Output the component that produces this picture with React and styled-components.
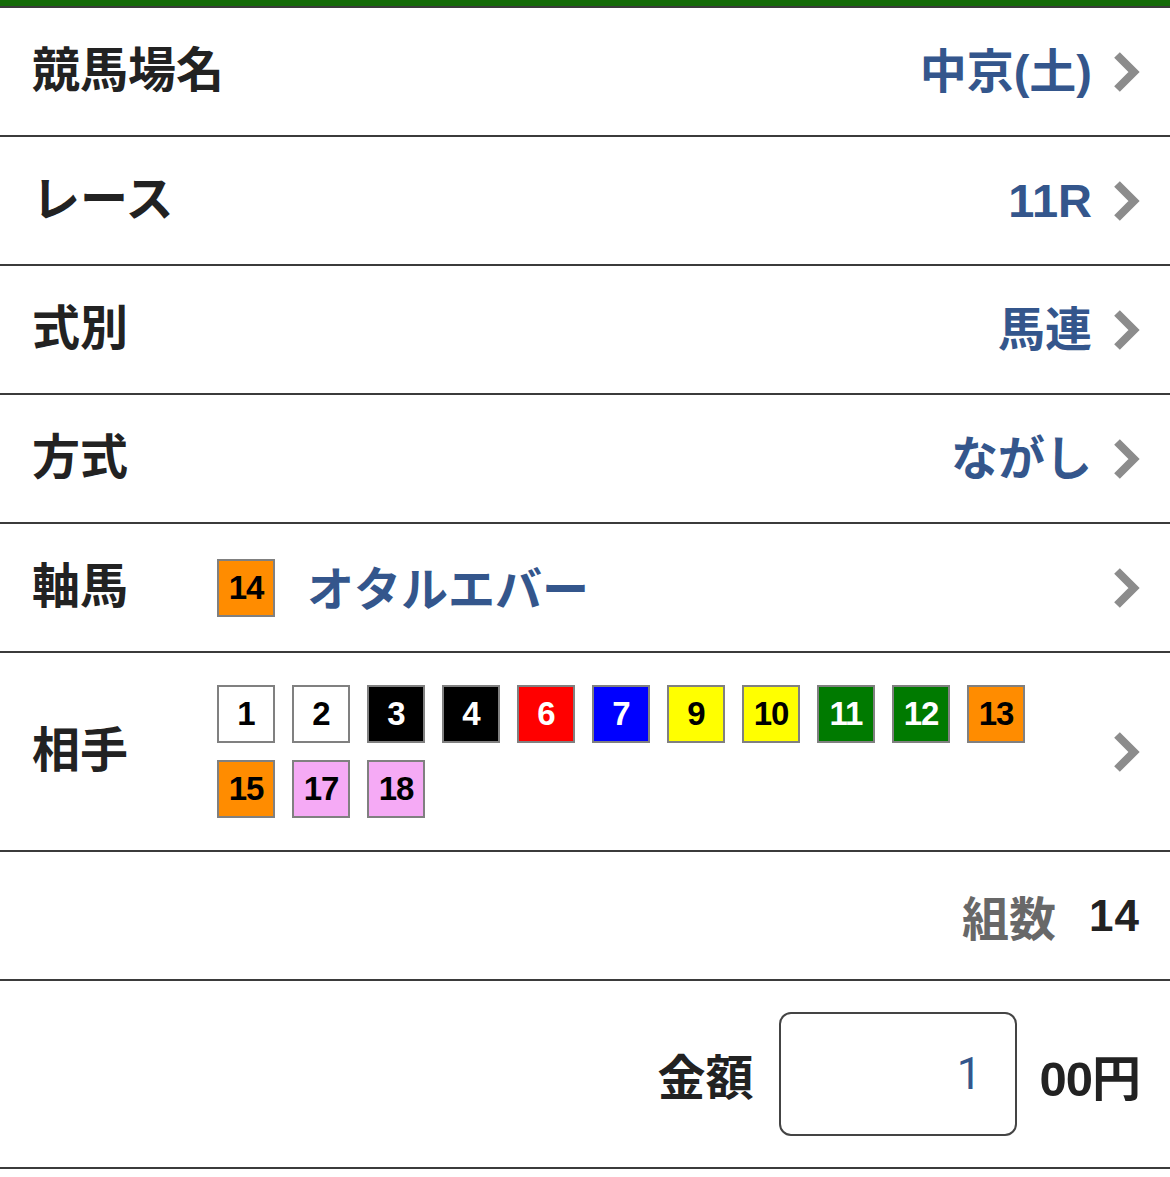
import styled, { createGlobalStyle } from "styled-components";

const GlobalStyle = createGlobalStyle`
  html, body {
    margin: 0;
    padding: 0;
    background: #fff;
  }
  body {
    font-family: "Liberation Sans", "Noto Sans CJK JP", sans-serif;
  }
`;

const Page = styled.div`
  width: 1170px;
  border-top: 6px solid #146a08;
`;

const Row = styled.div`
  display: flex;
  align-items: center;
  min-height: ${(p) => p.h || 127}px;
  padding: 0 30px 0 32px;
  border-top: 2px solid #3b3b3b;
  box-sizing: content-box;
  justify-content: ${(p) => (p.end ? "flex-end" : "flex-start")};
  &:last-child {
    border-bottom: 2px solid #3b3b3b;
  }
`;

const Label = styled.div`
  font-family: "Noto Sans CJK JP", sans-serif;
  font-weight: 700;
  font-size: 48px;
  color: #222;
  flex: ${(p) => (p.fixed ? "0 0 185px" : "1")};
  line-height: 1;
  padding-bottom: 12px;
`;

const Value = styled.div`
  font-family: "Liberation Sans", "Noto Sans CJK JP", sans-serif;
  font-weight: 700;
  font-size: 47px;
  color: #34568c;
  margin-right: 20px;
  line-height: 1;
`;

const Middle = styled.div`
  flex: 1;
  display: flex;
  align-items: center;
  margin-right: 20px;
`;

const HorseName = styled.div`
  font-family: "Noto Sans CJK JP", sans-serif;
  font-weight: 700;
  font-size: 47px;
  color: #34568c;
  margin-left: 32px;
  line-height: 1;
  padding-bottom: 4px;
`;

const Badges = styled.div`
  flex: 0 0 860px;
  display: flex;
  flex-wrap: wrap;
  gap: 17px;
  padding: 32px 0;
`;

const Badge = styled.div`
  width: 54px;
  height: 54px;
  border: 2px solid #808080;
  background: ${(p) => p.bg};
  color: ${(p) => p.fg};
  display: flex;
  align-items: center;
  justify-content: center;
  font-family: "Liberation Sans", sans-serif;
  font-weight: 700;
  font-size: 33px;
  letter-spacing: -1px;
`;

const ChevronWrap = styled.div`
  margin-left: auto;
  display: flex;
  align-items: center;
`;

const CountLabel = styled.span`
  font-family: "Noto Sans CJK JP", sans-serif;
  font-weight: 700;
  font-size: 47px;
  color: #686868;
  margin-right: 33px;
`;

const CountValue = styled.span`
  font-family: "Liberation Sans", sans-serif;
  font-weight: 700;
  font-size: 44px;
  color: #222;
  letter-spacing: 1px;
`;

const AmountLabel = styled.span`
  font-family: "Noto Sans CJK JP", sans-serif;
  font-weight: 700;
  font-size: 48px;
  color: #222;
  margin-right: 26px;
`;

const AmountBox = styled.div`
  width: 238px;
  height: 124px;
  border: 2px solid #444;
  border-radius: 12px;
  display: flex;
  align-items: center;
  justify-content: flex-end;
  padding-right: 34px;
  box-sizing: border-box;
  font-family: "Roboto", "Noto Sans", sans-serif;
  font-size: 44px;
  color: #34568c;
  margin-right: 22px;
`;

const Unit = styled.span`
  font-family: "Liberation Sans", "Noto Sans CJK JP", sans-serif;
  font-weight: 700;
  font-size: 49px;
  color: #222;
  letter-spacing: -1px;
`;

const Chevron = () => (
  <ChevronWrap>
    <svg width="28" height="42" viewBox="0 0 28 42">
      <polyline
        points="5,4 22,21 5,38"
        fill="none"
        stroke="#8c8c8c"
        strokeWidth="8"
      />
    </svg>
  </ChevronWrap>
);

const rivals = [
  [1, "#fff", "#000"],
  [2, "#fff", "#000"],
  [3, "#000", "#fff"],
  [4, "#000", "#fff"],
  [6, "#ff0000", "#fff"],
  [7, "#0000ff", "#fff"],
  [9, "#ffff00", "#000"],
  [10, "#ffff00", "#000"],
  [11, "#007a00", "#fff"],
  [12, "#007a00", "#fff"],
  [13, "#ff8c00", "#000"],
  [15, "#ff8c00", "#000"],
  [17, "#f5aaf5", "#000"],
  [18, "#f5aaf5", "#000"],
];

const simpleRows = [
  ["競馬場名", "中京(土)"],
  ["レース", "11R"],
  ["式別", "馬連"],
  ["方式", "ながし"],
];

export default function App() {
  return (
    <Page>
      <GlobalStyle />
      {simpleRows.map(([label, value]) => (
        <Row key={label}>
          <Label>{label}</Label>
          <Value>{value}</Value>
          <Chevron />
        </Row>
      ))}
      <Row>
        <Label fixed>軸馬</Label>
        <Middle>
          <Badge bg="#ff8c00" fg="#000">14</Badge>
          <HorseName>オタルエバー</HorseName>
        </Middle>
        <Chevron />
      </Row>
      <Row h={197}>
        <Label fixed>相手</Label>
        <Badges>
          {rivals.map(([n, bg, fg]) => (
            <Badge key={n} bg={bg} fg={fg}>
              {n}
            </Badge>
          ))}
        </Badges>
        <Chevron />
      </Row>
      <Row end>
        <CountLabel>組数</CountLabel>
        <CountValue>14</CountValue>
      </Row>
      <Row end h={186}>
        <AmountLabel>金額</AmountLabel>
        <AmountBox>1</AmountBox>
        <Unit>00円</Unit>
      </Row>
    </Page>
  );
}
